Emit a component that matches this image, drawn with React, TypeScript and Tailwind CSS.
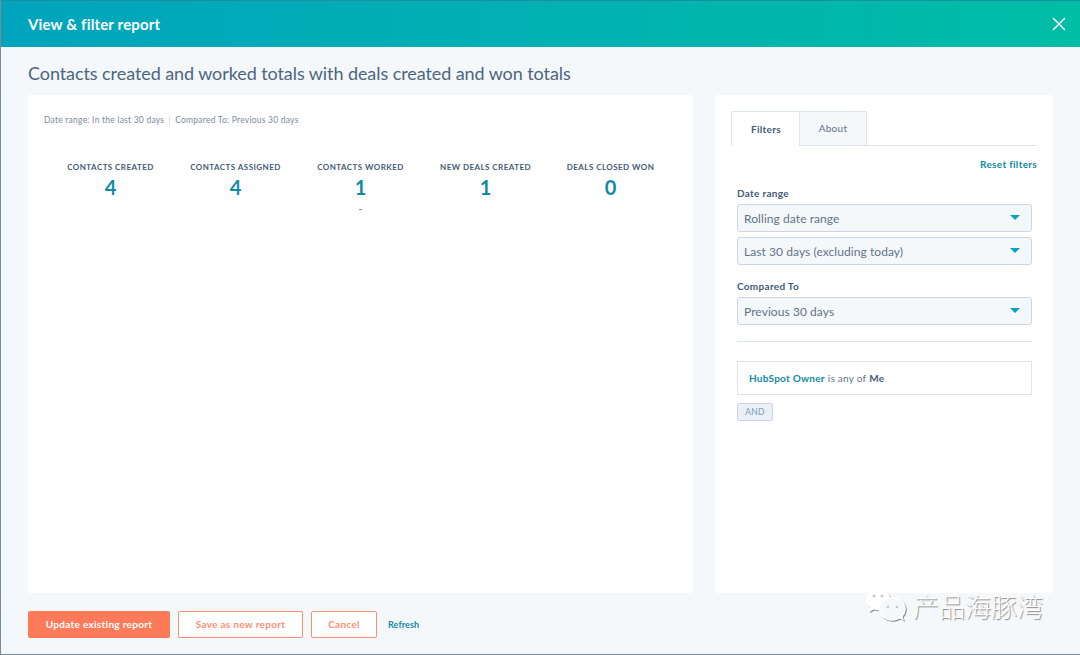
import { X } from "lucide-react";

const stats = [
  { label: "CONTACTS CREATED", value: "4" },
  { label: "CONTACTS ASSIGNED", value: "4" },
  { label: "CONTACTS WORKED", value: "1", dash: true },
  { label: "NEW DEALS CREATED", value: "1" },
  { label: "DEALS CLOSED WON", value: "0" },
];

function Dropdown({ text }: { text: string }) {
  return (
    <div className="flex h-[28px] w-[295px] items-center justify-between rounded-[3px] border border-[#cbd6e2] bg-[#f5f8fa] pl-[6px] pr-[11px] text-[12px] tracking-[0.07px] text-[#5f7389]">
      <span className="pt-[1px]">{text}</span>
      <span className="mb-[1px] h-0 w-0 border-x-[5px] border-t-[5px] border-x-transparent border-t-[#00a4bd]" />
    </div>
  );
}

export default function App() {
  return (
    <div className="relative flex h-[655px] w-[1080px] flex-col overflow-hidden border-b border-l border-[#7c8894] bg-[#f5f8fa] font-['Lato','Liberation_Sans',sans-serif]">
      <header className="flex h-[47px] shrink-0 items-center justify-between border-t border-[#1b8fa0] bg-gradient-to-r from-[#00a4bd] to-[#00bda5] pl-[27px] pr-[10px]">
        <h1 className="text-[15px] font-bold tracking-[0.16px] text-white">View &amp; filter report</h1>
        <X className="h-[22px] w-[22px] text-white" strokeWidth={1.6} />
      </header>

      <div className="flex min-h-0 flex-1 flex-col pl-[27px] pr-[27px]">
        <h2 className="mt-[15px] h-[33px] text-[18px] leading-[23px] tracking-[-0.08px] text-[#4d6580]">
          Contacts created and worked totals with deals created and won totals
        </h2>

        <div className="flex h-[498px] gap-[22px]">
          <section className="w-[665px] rounded-[2px] bg-white pl-[20px] pr-[12px] pt-[19px]">
            <div className="-ml-[4px] flex items-center text-[8.5px] tracking-[0.23px] text-[#7c8b9c]">
              <span>Date range: In the last 30 days</span>
              <span className="mx-[5px] h-[11px] w-px bg-[#dfe3eb]" />
              <span>Compared To: Previous 30 days</span>
            </div>
            <div className="mt-[34px] flex">
              {stats.map((s) => (
                <div key={s.label} className="flex w-[125px] flex-col items-center">
                  <span className="whitespace-nowrap text-[8px] font-bold leading-[12px] tracking-[0.45px] text-[#425b76]">
                    {s.label}
                  </span>
                  <span className="mt-[3px] text-[20px] font-bold leading-[22px] text-[#0f8ba6]">{s.value}</span>
                  {s.dash && <span className="mt-[11px] h-px w-[3px] bg-[#7c98b6]" />}
                </div>
              ))}
            </div>
          </section>

          <aside className="w-[338px] rounded-[2px] bg-white pl-[16px] pr-[16px] pt-[16px]">
            <div className="flex h-[35px] border-b border-[#dfe3eb] text-[10px]">
              <div className="-mb-px flex w-[69px] items-center justify-center rounded-t-[2px] border-l border-r border-t border-[#dfe3eb] bg-white pl-[1px] font-bold tracking-[0.3px] text-[#425b76]">
                Filters
              </div>
              <div className="flex w-[67px] items-center justify-center rounded-t-[2px] border-r border-t border-[#dfe3eb] bg-[#f5f8fa] text-[10px] tracking-[0.3px] text-[#5f7389]">
                About
              </div>
            </div>

            <div className="mt-[12px] flex justify-end text-[10px] font-bold leading-[13px] tracking-[0.3px] text-[#0f8ba6]">
              Reset filters
            </div>

            <div className="pl-[6px]">
              <div className="mt-[16px] text-[10px] font-bold leading-[13px] tracking-[0.3px] text-[#425b76]">Date range</div>
              <div className="mt-[4px] flex flex-col gap-[5px]">
                <Dropdown text="Rolling date range" />
                <Dropdown text="Last 30 days (excluding today)" />
              </div>

              <div className="mt-[15px] text-[10px] font-bold leading-[13px] tracking-[0.3px] text-[#425b76]">Compared To</div>
              <div className="mt-[4px]">
                <Dropdown text="Previous 30 days" />
              </div>

              <div className="mt-[16px] h-px w-[295px] bg-[#dfe3eb]" />

              <div className="mt-[19px] flex h-[34px] w-[295px] items-center border border-[#dfe3eb] pl-[11px] text-[10px] tracking-[0.25px] text-[#5f7389]">
                <span className="font-bold text-[#0f8ba6]">HubSpot Owner</span>
                <span className="ml-[3px]">is any of</span>
                <span className="ml-[3px] font-bold text-[#425b76]">Me</span>
              </div>

              <div className="mt-[8px] flex h-[18px] w-[36px] items-center justify-center rounded-[2px] border border-[#cbd6e2] bg-[#eaf0f6] text-[8.5px] tracking-[0.2px] text-[#7c98b6]">
                AND
              </div>
            </div>
          </aside>
        </div>

        <footer className="mt-[18px] flex items-center text-[10px] font-bold tracking-[0.3px]">
          <div className="flex h-[27px] w-[142px] items-center justify-center rounded-[2px] bg-[#ff7a59] text-white">
            Update existing report
          </div>
          <div className="ml-[8px] flex h-[27px] w-[125px] items-center justify-center rounded-[2px] border border-[#ff8f73] bg-white text-[#ff8f73]">
            Save as new report
          </div>
          <div className="ml-[8px] flex h-[27px] w-[66px] items-center justify-center rounded-[2px] border border-[#ff8f73] bg-white text-[#ff8f73]">
            Cancel
          </div>
          <span className="ml-[11px] text-[9px] tracking-[0.1px] text-[#0f8ba6]">Refresh</span>
        </footer>
      </div>

      <div className="absolute left-[863px] top-[588px] flex items-center gap-[5px] font-['Noto_Sans_CJK_SC',sans-serif] text-[26px] font-light leading-[36px] text-white [text-shadow:1px_1px_1px_#8a8a8a]">
        <svg width="44" height="36" viewBox="0 0 44 36" fill="none" className="drop-shadow-[1px_1px_0.5px_#8a8a8a]">
          <path d="M14 2C7 2 1.5 6.5 1.5 12c0 3.2 1.8 6 4.6 7.8L5 24l5-2.6c1.4.4 2.600.5 4 .5 6.500 0 12.500-4.500 12.500-10S21 2 14 2Z" fill="#fff" />
          <ellipse cx="28" cy="21" rx="13" ry="11" fill="#f5f8fa" stroke="#fff" strokeWidth="1.500" />
          <path d="M35 30l5 3-1.500-5" fill="#fff" />
          <circle cx="10" cy="8" r="1.500" fill="#c8c8c8" />
          <circle cx="18" cy="8" r="1.500" fill="#c8c8c8" />
          <circle cx="24" cy="19" r="1.300" fill="#c8c8c8" />
          <circle cx="33" cy="19" r="1.300" fill="#c8c8c8" />
        </svg>
        <span>产品海豚湾</span>
      </div>
    </div>
  );
}
